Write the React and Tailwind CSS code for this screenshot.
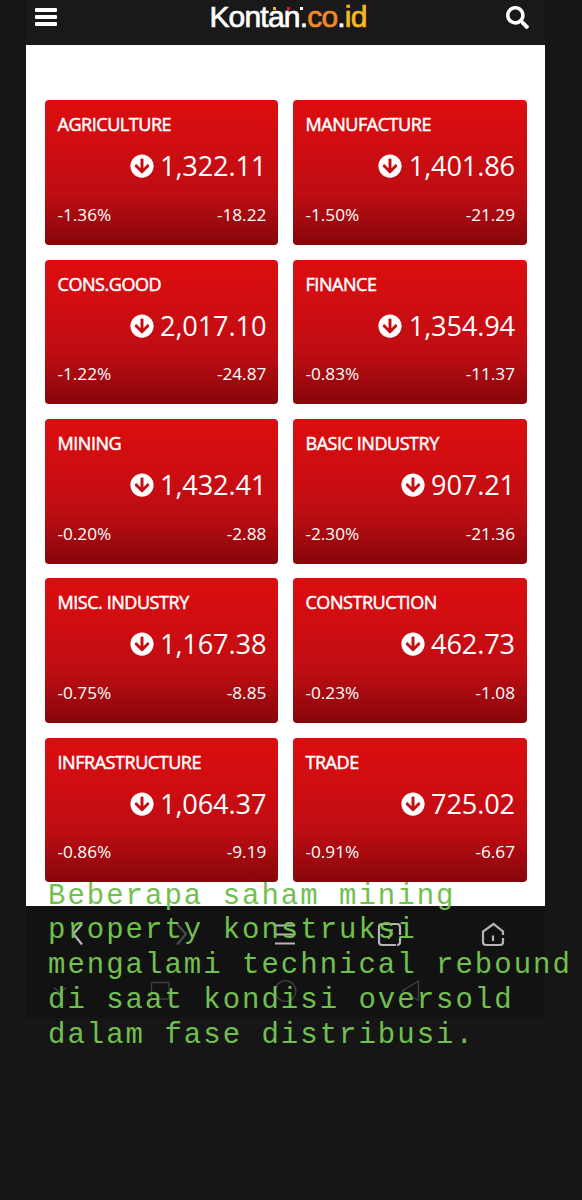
import { FaArrowCircleDown, FaSearch } from 'react-icons/fa';

const sectors = [
  { name: 'AGRICULTURE', value: '1,322.11', percent: '-1.36%', change: '-18.22' },
  { name: 'MANUFACTURE', value: '1,401.86', percent: '-1.50%', change: '-21.29' },
  { name: 'CONS.GOOD', value: '2,017.10', percent: '-1.22%', change: '-24.87' },
  { name: 'FINANCE', value: '1,354.94', percent: '-0.83%', change: '-11.37' },
  { name: 'MINING', value: '1,432.41', percent: '-0.20%', change: '-2.88' },
  { name: 'BASIC INDUSTRY', value: '907.21', percent: '-2.30%', change: '-21.36' },
  { name: 'MISC. INDUSTRY', value: '1,167.38', percent: '-0.75%', change: '-8.85' },
  { name: 'CONSTRUCTION', value: '462.73', percent: '-0.23%', change: '-1.08' },
  { name: 'INFRASTRUCTURE', value: '1,064.37', percent: '-0.86%', change: '-9.19' },
  { name: 'TRADE', value: '725.02', percent: '-0.91%', change: '-6.67' },
];

const caption = [
  'Beberapa saham mining',
  'property konstruksi',
  'mengalami technical rebound',
  'di saat kondisi oversold',
  'dalam fase distribusi.',
];

function Header() {
  return (
    <header className="flex h-[45px] items-start justify-between bg-[#191919] pl-[9px] pr-[16px]">
      <div className="mt-2 flex w-[22px] flex-col gap-[3px]">
        <span className="h-1 rounded-[1px] bg-white" />
        <span className="h-1 rounded-[1px] bg-white" />
        <span className="h-1 rounded-[1px] bg-white" />
      </div>
      <div className="relative ml-[13px] mt-[1px] whitespace-nowrap font-['Liberation_Sans',sans-serif] text-[30px] leading-8 tracking-[-0.8px] text-white [-webkit-text-stroke:0.7px]">
        Kontan<span>.</span>
        <span className="text-[#ee8a2b]">co</span>.<span className="text-[#f6b923]">id</span>
        <span className="absolute left-[64px] top-[6px] size-[3px] bg-[#f6b923]" />
        <span className="absolute left-[78px] top-[6px] size-[3px] bg-[#d3222a]" />
        <span className="absolute left-[91px] top-[6px] size-[3px] bg-white" />
      </div>
      <FaSearch className="mt-[6px] size-[23px] text-white" />
    </header>
  );
}

function SectorCard({ name, value, percent, change }) {
  return (
    <div className="flex h-[144.6px] flex-col rounded-[4px] bg-[linear-gradient(#dc0d0f_0%,#d00d11_30%,#bd0d13_65%,#86060a_100%)] pl-[12.5px] pr-[12px] font-['Open_Sans',sans-serif] text-white">
      <div className="mt-3 h-6 text-[18px] leading-6 tracking-[-0.45px] [-webkit-text-stroke:0.5px]">{name}</div>
      <div className="mt-3 flex h-9 items-center justify-end gap-[6.5px] text-[27.2px] leading-9 tracking-[-0.15px]">
        <FaArrowCircleDown className="size-[24px]" />
        <span>{value}</span>
      </div>
      <div className="mt-[18.5px] flex justify-between text-[17.2px] leading-6">
        <span>{percent}</span>
        <span>{change}</span>
      </div>
    </div>
  );
}

function BrowserBar() {
  return (
    <div className="h-[112px] bg-[#121212]">
      <svg className="block h-[112px] w-[519px]" viewBox="26 906 519 112" fill="none" strokeWidth="2.2">
        <g stroke="#b5b5b5">
          <path d="M82 924 L73.5 934 L82 944.5" />
          <path d="M275 925.5h20M275 934.5h20M275 943.5h20" />
          <path d="M400 935v-8a3 3 0 0 0-3-3h-15a3 3 0 0 0-3 3v15a3 3 0 0 0 3 3h14M400 938v4a3 3 0 0 1-3 3" />
          <path d="M386 930h6l-3.500 9" strokeWidth="1.6" />
          <path d="M503 935v-3.500L493.500 924l-10.500 7.500V942a3 3 0 0 0 3 3h14M503 938v4a3 3 0 0 1-3 3M493 935.500v5.500" />
        </g>
        <path d="M177 924l9 10-9 10.500" stroke="#4c4c4c" />
        <g stroke="#414141" strokeWidth="1.3">
          <path d="M54 987.500l6 5.500 6-5.500" />
          <rect x="151.500" y="982.500" width="17.500" height="16.500" rx="1" />
          <circle cx="285.500" cy="991" r="10.300" />
          <path d="M418.500 981v19.500L402 991z" strokeLinejoin="round" />
        </g>
      </svg>
    </div>
  );
}

export default function App() {
  return (
    <div className="relative h-[1200px] w-[582px] overflow-hidden bg-[#161616] pl-[26px]">
      <div className="w-[519px]">
        <Header />
        <main className="h-[861px] bg-white px-[19px] pt-[55.3px]">
          <div className="grid grid-cols-[233.3px_234px] gap-x-[14.7px] gap-y-[14.8px]">
            {sectors.map((sector) => (
              <SectorCard key={sector.name} {...sector} />
            ))}
          </div>
        </main>
        <BrowserBar />
      </div>
      <div className="absolute left-[48px] top-[879.5px] whitespace-pre font-['Liberation_Mono',monospace] text-[29px] leading-[34.8px] tracking-[2px] text-[#71c04f]">
        {caption.map((line) => (
          <p key={line}>{line}</p>
        ))}
      </div>
    </div>
  );
}
